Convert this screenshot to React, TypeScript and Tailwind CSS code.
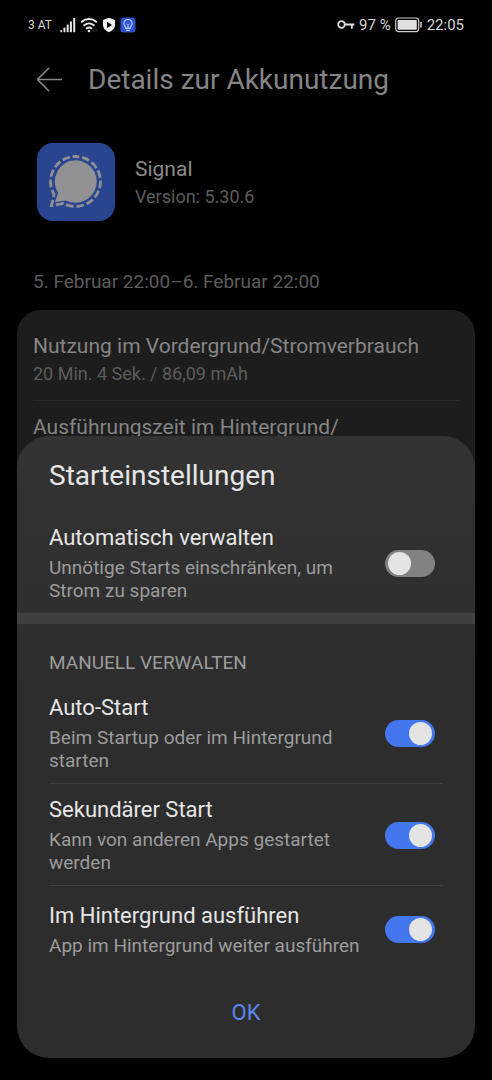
import { useState } from 'react'

type Setting = {
  id: string
  title: string
  description: string
}

const MANUAL_SETTINGS: Setting[] = [
  {
    id: 'auto-start',
    title: 'Auto-Start',
    description: 'Beim Startup oder im Hintergrund starten',
  },
  {
    id: 'secondary-start',
    title: 'Sekundärer Start',
    description: 'Kann von anderen Apps gestartet werden',
  },
  {
    id: 'background',
    title: 'Im Hintergrund ausführen',
    description: 'App im Hintergrund weiter ausführen',
  },
]

function StatusBar() {
  return (
    <div className="flex h-[50px] items-center justify-between px-7 text-[#d6d6d6]">
      <div className="flex items-center gap-1">
        <span className="mr-1 text-xs">3 AT</span>
        {/* Signal strength */}
        <svg width="16" height="16" viewBox="0 0 16 16" fill="#e8e8e8">
          <rect x="0.3" y="13.2" width="1.8" height="2" />
          <rect x="3.5" y="10.6" width="1.9" height="4.6" />
          <rect x="6.7" y="7.6" width="2" height="7.6" />
          <rect x="9.9" y="4.4" width="2" height="10.8" />
          <rect x="13.2" y="1" width="2" height="14.2" />
        </svg>
        {/* Wi-Fi */}
        <svg width="18" height="16" viewBox="0 0 18 16" fill="none" stroke="#e8e8e8" strokeWidth="2" strokeLinecap="round">
          <path d="M1.8 4.8a11 11 0 0 1 14.4 0" />
          <path d="M4.2 8.2a7.4 7.4 0 0 1 9.6 0" />
          <path d="M6.6 11.3a4 4 0 0 1 4.8 0" />
          <circle cx="9" cy="14" r="1.3" fill="#e8e8e8" stroke="none" />
          <path d="M14 12.4l-1 1 1 1M16 12.4l1 1-1 1" stroke="#5c5c5c" strokeWidth="0.8" />
        </svg>
        {/* Play Protect */}
        <svg width="14" height="16" viewBox="0 0 14 16">
          <path d="M7 0.8l6 2.2v4.8c0 3.4-2.4 6-6 7.4-3.6-1.4-6-4-6-7.4V3z" fill="#f0f0f0" />
          <path d="M5 4.8v6.2l5-3.1z" fill="#000" />
        </svg>
        {/* Tips */}
        <svg width="16" height="16" viewBox="0 0 16 16" fill="none">
          <rect x="0.5" y="0.5" width="15" height="15" rx="3.5" fill="#2f55d4" />
          <path
            d="M6 11.4c0-1.8-2.1-2.4-2.1-4.8a4.1 4.1 0 0 1 8.200 0c0 2.400-2.100 3-2.100 4.800zM6.200 13.400h3.600"
            stroke="#b9cdfa"
            strokeWidth="1.2"
          />
          <path d="M8 11V7.800M6.800 6.600L8 7.800l1.200-1.200" stroke="#b9cdfa" strokeWidth="1" />
        </svg>
      </div>
      <div className="flex items-center gap-1 text-[15px]">
        {/* VPN key */}
        <svg width="18" height="12" viewBox="0 0 18 12" fill="none" stroke="#dedede" strokeWidth="1.8">
          <circle cx="4.500" cy="5.500" r="3.300" />
          <path d="M7.800 5.500h9.600M14.800 5.500v4.200" />
        </svg>
        <span>97 %</span>
        {/* Battery */}
        <svg width="28" height="16" viewBox="0 0 28 16" fill="none">
          <rect x="0.700" y="1" width="23" height="13.600" rx="2.800" stroke="#d0d0d0" strokeWidth="1.200" />
          <rect x="2.600" y="2.900" width="19.200" height="9.800" rx="1.200" fill="#e0e0e0" />
          <path d="M26 5v5.600" stroke="#d0d0d0" strokeWidth="1.600" />
        </svg>
        <span>22:05</span>
      </div>
    </div>
  )
}

function SignalLogo() {
  return (
    <svg width="78" height="78" viewBox="0 0 78 78" fill="none" className="shrink-0">
      <rect width="78" height="78" rx="16" fill="#2a458f" />
      <path
        d="M38.5 17.300a21.200 21.200 0 1 1-9.600 40.100l-11 1.900 3.200-9.600A21.200 21.200 0 0 1 38.500 17.300z"
        fill="#919194"
      />
      <path
        d="M38.500 13.500a25 25 0 1 1-12.100 46.900l-11.900 2.200 2.600-11.200A25 25 0 0 1 38.500 13.500z"
        stroke="#919194"
        strokeWidth="2.800"
        strokeDasharray="7.600 2.900"
        strokeDashoffset="3.800"
      />
    </svg>
  )
}

type ToggleRowProps = {
  setting: Setting
  checked: boolean
  onChange: (checked: boolean) => void
}

function ToggleRow({ setting, checked, onChange }: ToggleRowProps) {
  return (
    <label htmlFor={setting.id} className="flex items-center justify-between gap-2 pr-2">
      <span className="flex flex-col gap-1">
        <span className="text-[22px] leading-7 text-[#e6e6e6]">{setting.title}</span>
        <span className="text-[19px] leading-[23px] text-[#9c9c9c]">{setting.description}</span>
      </span>
      <input
        id={setting.id}
        type="checkbox"
        role="switch"
        checked={checked}
        onChange={(e) => onChange(e.target.checked)}
        className="flex h-[27px] w-[50px] shrink-0 appearance-none items-center rounded-full bg-[#828282] px-[3px]
          before:size-[23px] before:rounded-full before:bg-[#e4e4e4] before:content-['']
          checked:justify-end checked:bg-[#4477ee]"
      />
    </label>
  )
}

export default function App() {
  const [autoManage, setAutoManage] = useState(false)
  const [enabled, setEnabled] = useState<Record<string, boolean>>({
    'auto-start': true,
    'secondary-start': true,
    background: true,
  })

  return (
    <div className="min-h-screen bg-black font-['Roboto',sans-serif]">
      <StatusBar />

      <main className="px-[17px]">
        <header className="flex h-[60px] items-center gap-[23px] pl-5">
          <button type="button" aria-label="Zurück">
            <svg width="28" height="26" viewBox="0 0 28 26" fill="none" stroke="#858585" strokeWidth="1.6">
              <path d="M25 12.500H0.500M12.200 0.800L0.500 12.500l11.700 11.700" />
            </svg>
          </button>
          <h1 className="text-[28px] text-[#858585]">Details zur Akkunutzung</h1>
        </header>

        {/* App info */}
        <div className="mt-[33px] flex items-start gap-5 pl-5">
          <SignalLogo />
          <div className="pt-3">
            <p className="text-[21px] leading-7 text-[#8a8a8a]">Signal</p>
            <p className="text-lg leading-7 text-[#5c5c5c]">Version: 5.30.6</p>
          </div>
        </div>

        <p className="mt-[47px] pl-4 text-[19px] leading-7 text-[#5c5c5c]">
          5. Februar 22:00–6. Februar 22:00
        </p>

        <section className="mt-3.5 h-[480px] rounded-3xl bg-[#1d1d1d] px-4 pt-[22px]">
          <div className="border-b border-[#2a2a2a] pb-3">
            <p className="text-[21px] leading-7 text-[#858585]">Nutzung im Vordergrund/Stromverbrauch</p>
            <p className="text-lg leading-7 text-[#5c5c5c]">20 Min. 4 Sek. / 86,09 mAh</p>
          </div>
          <p className="pt-3 text-[21px] leading-7 text-[#858585]">Ausführungszeit im Hintergrund/</p>
        </section>
      </main>

      {/* Start settings dialog */}
      <div className="fixed inset-0 flex items-end px-[17px] pb-[22px]">
        <div
          role="dialog"
          aria-labelledby="dialog-title"
          className="w-full rounded-[32px] bg-linear-to-b from-[#333333] to-[#2d2d2d] to-40% pt-[22px]"
        >
          <h2 id="dialog-title" className="px-8 text-[28px] leading-9 text-[#e6e6e6]">
            Starteinstellungen
          </h2>

          <div className="px-8 pt-[30px] pb-[11px]">
            <ToggleRow
              setting={{
                id: 'auto-manage',
                title: 'Automatisch verwalten',
                description: 'Unnötige Starts einschränken, um Strom zu sparen',
              }}
              checked={autoManage}
              onChange={setAutoManage}
            />
          </div>

          <div className="h-[11px] bg-[#404040]" />

          <div className="px-8 pt-[27px]">
            <h3 className="pb-2 text-[19px] leading-[23px] text-[#9c9c9c]">MANUELL VERWALTEN</h3>
            <div className="divide-y divide-[#404040]">
              {MANUAL_SETTINGS.map((setting) => (
                <div key={setting.id} className="pt-3 pb-[11px] last:pt-4">
                  <ToggleRow
                    setting={setting}
                    checked={enabled[setting.id]}
                    onChange={(checked) => setEnabled({ ...enabled, [setting.id]: checked })}
                  />
                </div>
              ))}
            </div>
          </div>

          <div className="px-8 pt-6 pb-[26px]">
            <button type="button" className="h-10 w-full text-[22px] text-[#5b87ea]">
              OK
            </button>
          </div>
        </div>
      </div>
    </div>
  )
}
